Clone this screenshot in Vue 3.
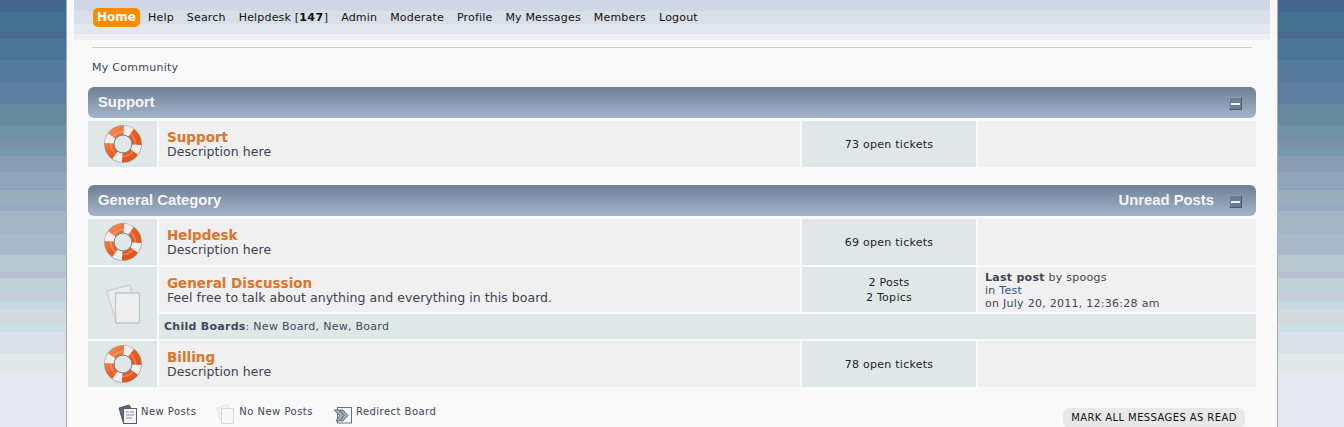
<script setup>
const navLinks = ['Help', 'Search', 'Helpdesk', 'Admin', 'Moderate', 'Profile', 'My Messages', 'Members', 'Logout']
</script>

<template>
  <div class="wrapper">
    <div class="inner">
      <nav class="topnav">
        <a class="nav-home">Home</a>
        <template v-for="link in navLinks" :key="link">
          <a class="nav-link">{{ link }}<template v-if="link === 'Helpdesk'"> [<b>147</b>]</template></a>
        </template>
      </nav>

      <div class="crumbs">My Community</div>

      <div class="board-list">
        <div class="cat-bar">
          <span class="cat-title">Support</span>
          <span class="collapse"><i></i></span>
        </div>
        <div class="row">
          <div class="cell icon-cell">
            <svg class="buoy" viewBox="0 0 40 40"><use href="#buoy-shape" /></svg>
          </div>
          <div class="cell info-cell">
            <a class="board-name">Support</a>
            <p class="board-desc">Description here</p>
          </div>
          <div class="cell stats-cell">73 open tickets</div>
          <div class="cell last-cell"></div>
        </div>

        <div class="cat-bar second">
          <span class="cat-title">General Category</span>
          <span class="cat-right">Unread Posts</span>
          <span class="collapse"><i></i></span>
        </div>
        <div class="row">
          <div class="cell icon-cell">
            <svg class="buoy" viewBox="0 0 40 40"><use href="#buoy-shape" /></svg>
          </div>
          <div class="cell info-cell">
            <a class="board-name">Helpdesk</a>
            <p class="board-desc">Description here</p>
          </div>
          <div class="cell stats-cell">69 open tickets</div>
          <div class="cell last-cell"></div>
        </div>
        <div class="row has-child">
          <div class="cell icon-cell tall">
            <svg class="paper" viewBox="0 0 40 44">
              <path d="M3.5 10 L26.8 4 L29 12 H12.5 V38 Z" fill="#e9eceb" stroke="#c6c9c9" stroke-width="1" />
              <rect x="12.5" y="12" width="24" height="30" rx="1.5" fill="#efefef" stroke="#c4c7c7" stroke-width="1.4" />
            </svg>
          </div>
          <div class="cell info-cell">
            <a class="board-name">General Discussion</a>
            <p class="board-desc">Feel free to talk about anything and everything in this board.</p>
          </div>
          <div class="cell stats-cell">2 Posts<br />2 Topics</div>
          <div class="cell last-cell filled">
            <b>Last post</b> by spoogs<br />
            in <a class="post-link">Test</a><br />
            on July 20, 2011, 12:36:28 am
          </div>
          <div class="cell child-cell">
            <b>Child Boards</b>: New Board, New, Board
          </div>
        </div>
        <div class="row">
          <div class="cell icon-cell">
            <svg class="buoy" viewBox="0 0 40 40"><use href="#buoy-shape" /></svg>
          </div>
          <div class="cell info-cell">
            <a class="board-name">Billing</a>
            <p class="board-desc">Description here</p>
          </div>
          <div class="cell stats-cell">78 open tickets</div>
          <div class="cell last-cell"></div>
        </div>
      </div>

      <div class="footer-row">
        <div class="legend">
          <span class="legend-item first">
            <svg class="legend-icon" viewBox="0 0 20 20">
              <path d="M1 4 L11 1 L13 4 L13 16 L5 18 Z" fill="#5c6a7c" stroke="#3f4a58" stroke-width="0.8" />
              <rect x="5.5" y="4.5" width="13" height="15" fill="#f4f4f4" stroke="#555d68" stroke-width="1" />
              <path d="M8 8h3M12 8h4M8 11h8M8 14h6" stroke="#8a8f96" stroke-width="1" />
            </svg>
            New Posts
          </span>
          <span class="legend-item second-item">
            <svg class="legend-icon" viewBox="0 0 20 20">
              <path d="M1 4 L11 1 L13 4 L13 16 L5 18 Z" fill="#f4f4f4" stroke="#dcdfdf" stroke-width="0.8" />
              <rect x="5.5" y="4.5" width="12" height="15" fill="#f8f8f8" stroke="#d8dada" stroke-width="1" />
            </svg>
            No New Posts
          </span>
          <span class="legend-item third-item">
            <svg class="legend-icon" viewBox="0 0 20 20">
              <rect x="4.5" y="3.5" width="14" height="15.5" fill="#f7f7f7" stroke="#6b7178" stroke-width="1" />
              <path d="M1 6 H6 L11 11.5 L6 17 H3 L6.5 11.5 Z" fill="#9db4c4" stroke="#4f5d6b" stroke-width="0.8" />
              <path d="M7 6 H10 L15 11.5 L10 17 H7.5 L11 11.5 Z" fill="#9db4c4" stroke="#4f5d6b" stroke-width="0.8" />
            </svg>
            Redirect Board
          </span>
        </div>
        <a class="mark-read">MARK ALL MESSAGES AS READ</a>
      </div>
    </div>

    <svg class="defs" width="0" height="0">
      <defs>
        <linearGradient id="buoy-shade" x1="0" y1="0" x2="1" y2="1">
          <stop offset="0" stop-color="#f98a4e" />
          <stop offset="0.5" stop-color="#ee5a20" />
          <stop offset="1" stop-color="#e2521c" />
        </linearGradient>
        <g id="buoy-shape">
          <circle cx="20" cy="20" r="14.5" fill="none" stroke="#8d8f94" stroke-width="10.6" />
          <circle cx="20" cy="20" r="14.5" fill="none" stroke="url(#buoy-shade)" stroke-width="9.2" />
          <circle cx="20" cy="20" r="14.5" fill="none" stroke="#f0eeee" stroke-width="9.8" pathLength="100"
            stroke-dasharray="9 16" stroke-dashoffset="-1" />
          <circle cx="20" cy="20" r="13" fill="none" stroke="#ffffff" stroke-width="2" opacity="0.22" />
          <circle cx="20" cy="20" r="9.4" fill="#e0e8e7" stroke="#777b82" stroke-width="1" />
        </g>
      </defs>
    </svg>
  </div>
</template>

<style scoped>
.wrapper {
  box-sizing: border-box;
  width: 1212px;
  height: 427px;
  margin-left: 66px;
  overflow: hidden;
  background: #f9f9f9;
  border-left: 1px solid #aaa;
  border-right: 1px solid #aaa;
  font-family: "DejaVu Sans", Verdana, sans-serif;
  font-size: 11px;
  letter-spacing: 0.27px;
  color: #333;
}
.inner {
  display: flex;
  flex-direction: column;
}
.defs {
  position: absolute;
}

.topnav {
  display: flex;
  align-items: center;
  gap: 13px;
  box-sizing: border-box;
  height: 40px;
  margin: 0 7px;
  padding: 0 19px 6px;
  color: #111;
  letter-spacing: 0.18px;
  background: linear-gradient(#d0d7e6 0 11px, #d9dfe8 11px 24px, #e3e7ef 24px 34px, #f0f0f0 34px);
}
.nav-home {
  box-sizing: border-box;
  width: 47px;
  height: 19px;
  line-height: 19px;
  text-align: center;
  color: #fff;
  font-weight: bold;
  font-size: 12px;
  letter-spacing: 0;
  background: #fb8c00;
  border-radius: 5px;
  margin-right: -5px;
}
.nav-link b {
  font-weight: bold;
  letter-spacing: 0.5px;
}

.crumbs {
  margin: 7px 25px 0;
  padding-top: 13px;
  height: 27px;
  box-sizing: border-box;
  border-top: 1px solid #ccc;
  color: #3a4654;
  line-height: 13px;
  width: 1160px;
}

.board-list {
  display: flex;
  flex-direction: column;
  margin: 13px 21px 0;
  width: 1168px;
}
.cat-bar {
  display: flex;
  align-items: center;
  box-sizing: border-box;
  height: 31px;
  padding: 0 14px 2px 10px;
  border-radius: 6px;
  background: linear-gradient(#6f7f96, #a3b5cb);
  color: #f4f6f8;
  font-family: "Liberation Sans", Arial, sans-serif;
  font-size: 14.8px;
  letter-spacing: 0;
  font-weight: bold;
}
.cat-bar.second {
  margin-top: 18px;
}
.cat-title {
  flex: 1;
}
.cat-right {
  margin-right: 15px;
}
.collapse {
  display: flex;
  align-items: center;
  justify-content: center;
  box-sizing: border-box;
  width: 13px;
  height: 13px;
  margin-top: 4px;
  background: #6c7c95;
  border: 1px solid #8d9cb2;
  border-right-color: #4b5a72;
  border-bottom-color: #4b5a72;
}
.collapse i {
  display: block;
  width: 9px;
  height: 2px;
  background: #f2f4f8;
}

.row {
  display: grid;
  grid-template-columns: 69px 641px 174px 278px;
  column-gap: 2px;
  row-gap: 2px;
  margin-top: 2px;
}
.row.has-child {
  grid-template-rows: 45px 25px;
}
.cat-bar + .row {
  margin-top: 3px;
}
.cell {
  box-sizing: border-box;
  min-height: 45px;
  background: #f0f0f0;
}
.row:not(.has-child) .cell {
  min-height: 46px;
}
.icon-cell {
  display: flex;
  align-items: center;
  justify-content: center;
  background: #e0e8e7;
}
.icon-cell.tall {
  grid-row: 1 / 3;
}
.buoy {
  width: 38px;
  height: 38px;
}
.paper {
  width: 40px;
  height: 44px;
}
.info-cell {
  padding: 10px 8px 0;
  letter-spacing: 0;
}
.board-name {
  display: block;
  font-size: 13.5px;
  line-height: 13px;
  font-weight: bold;
  color: #de7529;
}
.board-desc {
  margin: 0;
  font-size: 12.5px;
  line-height: 15px;
  letter-spacing: 0.05px;
  color: #3b4350;
}
.stats-cell {
  display: flex;
  align-items: center;
  justify-content: center;
  text-align: center;
  line-height: 15px;
  color: #222;
  background: #e0e8e7;
}
.last-cell.filled {
  padding: 4px 7px 0;
  line-height: 13px;
  color: #3e4654;
}
.post-link {
  color: #34508a;
}
.child-cell {
  grid-column: 2 / 5;
  min-height: 25px;
  padding: 0 5px;
  line-height: 25px;
  background: #e0e8e7;
  color: #3e4a5a;
}

.footer-row {
  display: flex;
  align-items: flex-start;
  justify-content: space-between;
  margin: 16px 32px 0 51px;
}
.legend {
  display: flex;
  font-size: 10px;
  letter-spacing: 0.47px;
  color: #3e4654;
}
.legend-item {
  display: flex;
  align-items: center;
  gap: 3px;
  height: 20px;
  line-height: 16px;
  padding-bottom: 2px;
  box-sizing: border-box;
}
.second-item,
.third-item {
  margin-left: 20px;
}
.legend-icon {
  width: 20px;
  height: 20px;
  flex: none;
  margin-top: 4px;
}
.mark-read {
  box-sizing: border-box;
  width: 182px;
  height: 20px;
  margin-top: 5px;
  line-height: 20px;
  text-align: center;
  font-size: 10px;
  letter-spacing: 0.4px;
  color: #111;
  background: #e8e8e8;
  border-radius: 7px;
}
</style>

<style>
html, body {
  margin: 0;
  height: 427px;
  overflow: hidden;
  background: linear-gradient(180deg,
    #44678f 0 12px, #42708f 12px 32px, #486c90 32px 39px, #4a7596 39px 60px,
    #557a9a 60px 82px, #5e80a0 82px 104px, #668a9f 104px 125px, #7092a8 125px 139px,
    #7b90aa 139px 147px, #7798ad 147px 156px, #8a9db5 156px 172px, #8ea5ba 172px 190px,
    #99aebe 190px 204px, #9aa8c2 204px 211px, #a2b5c5 211px 233px, #a9b9cb 233px 255px,
    #b8cad0 255px 272px, #bac0d2 272px 278px, #bed0d8 278px 293px, #c6cedc 293px 301px,
    #c8d8e0 301px 310px, #d2dae0 310px 325px, #ccdee6 325px 332px, #d8e0e8 332px 347px,
    #dcdfe8 347px 354px, #e0e8e8 354px 373px, #e6e8f2 373px);
}
</style>
